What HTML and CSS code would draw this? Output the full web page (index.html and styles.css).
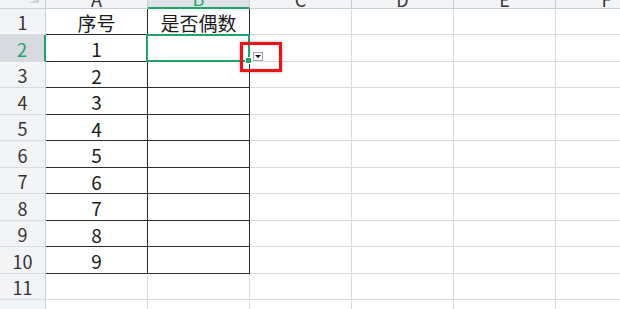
FILE: index.html
```html
<!DOCTYPE html>
<html lang="zh-CN">
<head>
<meta charset="utf-8">
<title>工作表</title>
<link rel="stylesheet" href="styles.css">
</head>
<body>
<div class="sheet">
  <div class="grid">
    <!-- column headers -->
    <div class="corner"><span class="corner-tri"></span></div>
    <div class="ch"><span>A</span></div>
    <div class="ch ch-sel"><span>B</span></div>
    <div class="ch"><span>C</span></div>
    <div class="ch"><span>D</span></div>
    <div class="ch"><span>E</span></div>
    <div class="ch"><span>F</span></div>

    <div class="rh">1</div>
    <div class="c bd">序号</div>
    <div class="c bd">是否偶数</div>
    <div class="c"></div><div class="c"></div><div class="c"></div><div class="c"></div>

    <div class="rh rh-sel">2</div>
    <div class="c bd">1</div>
    <div class="c bd active"><span class="handle"></span></div>
    <div class="c"></div><div class="c"></div><div class="c"></div><div class="c"></div>

    <div class="rh">3</div>
    <div class="c bd">2</div>
    <div class="c bd"></div>
    <div class="c"></div><div class="c"></div><div class="c"></div><div class="c"></div>

    <div class="rh">4</div>
    <div class="c bd">3</div>
    <div class="c bd"></div>
    <div class="c"></div><div class="c"></div><div class="c"></div><div class="c"></div>

    <div class="rh">5</div>
    <div class="c bd">4</div>
    <div class="c bd"></div>
    <div class="c"></div><div class="c"></div><div class="c"></div><div class="c"></div>

    <div class="rh">6</div>
    <div class="c bd">5</div>
    <div class="c bd"></div>
    <div class="c"></div><div class="c"></div><div class="c"></div><div class="c"></div>

    <div class="rh">7</div>
    <div class="c bd">6</div>
    <div class="c bd"></div>
    <div class="c"></div><div class="c"></div><div class="c"></div><div class="c"></div>

    <div class="rh">8</div>
    <div class="c bd">7</div>
    <div class="c bd"></div>
    <div class="c"></div><div class="c"></div><div class="c"></div><div class="c"></div>

    <div class="rh">9</div>
    <div class="c bd">8</div>
    <div class="c bd"></div>
    <div class="c"></div><div class="c"></div><div class="c"></div><div class="c"></div>

    <div class="rh">10</div>
    <div class="c bd">9</div>
    <div class="c bd"></div>
    <div class="c"></div><div class="c"></div><div class="c"></div><div class="c"></div>

    <div class="rh">11</div>
    <div class="c"></div><div class="c"></div><div class="c"></div><div class="c"></div><div class="c"></div><div class="c"></div>

    <div class="rh"></div>
    <div class="c"></div><div class="c"></div><div class="c"></div><div class="c"></div><div class="c"></div><div class="c"></div>
  </div>

  <!-- data validation dropdown button next to the active cell -->
  <div class="dropdown"><span class="tri"></span></div>
  <!-- red highlight frame -->
  <div class="mark"></div>
</div>
</body>
</html>
```

FILE: styles.css
```css
html, body {
  margin: 0;
  padding: 0;
  background: #ffffff;
}

.sheet {
  position: relative;
  width: 620px;
  height: 309px;
  overflow: hidden;
  font-family: "Noto Sans CJK SC", "Noto Sans", sans-serif;
  color: #1a1a1a;
}

.grid {
  display: grid;
  grid-template-columns: 46px repeat(6, 102px);
  grid-template-rows: 9px 26px 27px 26px 27px 26px 27px 26px 27px 26px 27px 26px 27px;
}

.grid > div {
  box-sizing: border-box;
}

/* corner (select all) */
.corner {
  position: relative;
  background: #f3f4f6;
  border-right: 1px solid #c9ced8;
  border-bottom: 1px solid #c9ced8;
}
.corner-tri {
  position: absolute;
  right: 6px;
  bottom: 5px;
  width: 0;
  height: 0;
  border-left: 11px solid transparent;
  border-bottom: 4px solid #cfd1d5;
}

/* column headers */
.ch {
  background: #f3f4f6;
  border-right: 1px solid #c9ced8;
  border-bottom: 1px solid #c9ced8;
  display: flex;
  justify-content: center;
  align-items: flex-end;
  overflow: hidden;
  font-size: 18px;
  color: #333;
}
.ch span {
  line-height: 18px;
}
.ch-sel {
  background: #dfe2e7;
  color: #21a366;
  border-bottom: 2px solid #21a366;
}

/* row headers */
.rh {
  background: #f3f4f6;
  border-right: 1px solid #c9ced8;
  border-bottom: 1px solid #d8dbe2;
  display: flex;
  align-items: center;
  justify-content: center;
  font-size: 18px;
  color: #333;
  padding-top: 1px;
}
.rh-sel {
  background: #d7dadf;
  color: #21a366;
  border-right: 2px solid #21a366;
}

/* cells */
.c {
  border-right: 1px solid #d8dbe3;
  border-bottom: 1px solid #d8dbe3;
  display: flex;
  align-items: center;
  justify-content: center;
  font-size: 19px;
  color: #1a1a1a;
  padding-top: 1px;
}
.c.bd {
  border-right-color: #2b2b2b;
  border-bottom-color: #2b2b2b;
}

/* active cell frame */
.active {
  position: relative;
}
.active::after {
  content: "";
  position: absolute;
  left: -2px;
  top: -1px;
  right: -1px;
  bottom: -1px;
  border: 2px solid #21a366;
  pointer-events: none;
}
.handle {
  position: absolute;
  right: -3px;
  bottom: -3px;
  width: 5px;
  height: 5px;
  background: #21a366;
  border: 1px solid #ffffff;
  z-index: 2;
}

/* dropdown button */
.dropdown {
  position: absolute;
  left: 253px;
  top: 52px;
  width: 10px;
  height: 9px;
  box-sizing: border-box;
  background: #ffffff;
  border: 1px solid #9aa3b3;
  display: flex;
  align-items: center;
  justify-content: center;
}
.tri {
  width: 0;
  height: 0;
  border-left: 3px solid transparent;
  border-right: 3px solid transparent;
  border-top: 3px solid #111;
}

/* red highlight frame */
.mark {
  position: absolute;
  left: 240px;
  top: 42px;
  width: 42px;
  height: 30px;
  box-sizing: border-box;
  border: 3px solid #e8141a;
  box-shadow: 0 0 3px rgba(0, 0, 0, 0.35), inset 0 0 2px rgba(0, 0, 0, 0.25);
}
```
